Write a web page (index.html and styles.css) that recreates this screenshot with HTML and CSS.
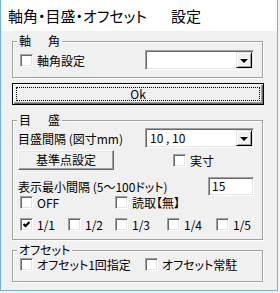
FILE: index.html
```html
<!DOCTYPE html>
<html lang="ja">
<head>
    <meta charset="UTF-8">
    <title>軸角・目盛・オフセット 設定</title>
    <link rel="stylesheet" href="styles.css">
</head>
<body>
    <div class="window">
        <div class="titlebar">
            <span>軸角・目盛・オフセット</span><span class="title-tail">設定</span>
        </div>

        <div class="client">
            <fieldset class="group group-axis">
                <legend>軸<span class="gap"></span>角</legend>
                <div class="row">
                    <label class="check"><span class="box"></span>軸角設定</label>
                    <div class="combo">
                        <span class="combo-value"></span>
                        <span class="drop"><i class="arrow"></i></span>
                    </div>
                </div>
            </fieldset>

            <button class="btn btn-default"><span class="focus">Ok</span></button>

            <fieldset class="group group-scale">
                <legend>目<span class="gap"></span>盛</legend>
                <div class="row row-pitch">
                    <span>目盛間隔 (図寸mm)</span>
                    <div class="combo">
                        <span class="combo-value">10 , 10</span>
                        <span class="drop"><i class="arrow"></i></span>
                    </div>
                </div>
                <div class="row row-base">
                    <button class="btn btn-base">基準点設定</button>
                    <label class="check check-real"><span class="box"></span>実寸</label>
                </div>
                <div class="row row-min">
                    <span>表示最小間隔 (5～100ドット)</span>
                    <div class="field">15</div>
                </div>
                <div class="row row-checks row-off">
                    <label class="check col-off"><span class="box"></span>OFF</label>
                    <label class="check"><span class="box"></span>読取【無】</label>
                </div>
                <div class="row row-checks row-frac">
                    <label class="check frac-1"><span class="box checked"><svg viewBox="0 0 7 7" width="7" height="7"><polyline points="0.5,3 2.5,5 6.5,1" fill="none" stroke="#000" stroke-width="2"/></svg></span>1/1</label>
                    <label class="check frac-2"><span class="box"></span>1/2</label>
                    <label class="check frac-3"><span class="box"></span>1/3</label>
                    <label class="check frac-4"><span class="box"></span>1/4</label>
                    <label class="check"><span class="box"></span>1/5</label>
                </div>
            </fieldset>

            <fieldset class="group group-offset">
                <legend class="legend-plain">オフセット</legend>
                <div class="row row-checks">
                    <label class="check col-once"><span class="box"></span>オフセット1回指定</label>
                    <label class="check"><span class="box"></span>オフセット常駐</label>
                </div>
            </fieldset>
        </div>
    </div>
</body>
</html>
```

FILE: styles.css
```css
html, body {
    margin: 0;
    padding: 0;
}

body {
    background: #f3f3f3;
    font-family: "Noto Sans CJK JP", sans-serif;
    font-size: 12px;
    color: #000;
    font-feature-settings: "palt";
}

.window {
    box-sizing: border-box;
    width: 278px;
    height: 291px;
    border: 1px solid #78aee0;
    border-top: none;
    background: #f0f0f0;
}

.titlebar {
    height: 31px;
    line-height: 31px;
    padding-left: 7px;
    background: #fff;
    font-size: 15px;
    white-space: nowrap;
}

.title-tail {
    margin-left: 24px;
}

.client {
    padding: 3px 13px 0 11px;
}

/* group boxes */
.group {
    width: 251px;
    box-sizing: border-box;
    margin: 0;
    padding: 2px 8px 7px 5px;
    border: 1px solid #a0a0a0;
    box-shadow: inset 1px 1px 0 #fff, 1px 1px 0 #fff;
    min-width: 0;
}

.group legend {
    padding: 0 2px;
    margin-left: -1px;
    line-height: 14px;
    background: #f0f0f0;
}

.gap {
    display: inline-block;
    width: 17px;
}

.row {
    display: flex;
    align-items: center;
}

.group-axis .row {
    height: 20px;
}

/* checkbox */
.check {
    display: flex;
    align-items: center;
    height: 13px;
    line-height: 13px;
    margin-left: 2px;
    white-space: nowrap;
}

.box {
    box-sizing: border-box;
    width: 13px;
    height: 13px;
    margin-right: 4px;
    background: #fff;
    border: 1px solid;
    border-color: #a0a0a0 #fff #fff #a0a0a0;
    box-shadow: inset 1px 1px 0 #696969, inset -1px -1px 0 #e3e3e3;
    display: flex;
    align-items: center;
    justify-content: center;
    flex: none;
}

.box svg {
    display: block;
}

/* combo box */
.combo {
    box-sizing: border-box;
    display: flex;
    width: 109px;
    height: 20px;
    margin-left: auto;
    padding: 1px;
    background: #fff;
    border: 1px solid;
    border-color: #a0a0a0 #fff #fff #a0a0a0;
    box-shadow: inset 1px 1px 0 #696969, inset -1px -1px 0 #e3e3e3;
}

.combo-value {
    flex: 1;
    padding-left: 3px;
    line-height: 16px;
}

.drop {
    box-sizing: border-box;
    width: 16px;
    height: 16px;
    background: #f0f0f0;
    border: 1px solid;
    border-color: #e3e3e3 #000 #000 #e3e3e3;
    box-shadow: inset 1px 1px 0 #fff, inset -1px -1px 0 #a0a0a0;
    display: flex;
    align-items: center;
    justify-content: center;
}

.arrow {
    width: 0;
    height: 0;
    border-left: 4px solid transparent;
    border-right: 4px solid transparent;
    border-top: 4px solid #000;
    margin-top: 1px;
}

.field {
    box-sizing: border-box;
    width: 46px;
    height: 19px;
    margin-left: auto;
    padding-left: 3px;
    line-height: 15px;
    background: #fff;
    border: 1px solid;
    border-color: #a0a0a0 #fff #fff #a0a0a0;
    box-shadow: inset 1px 1px 0 #696969, inset -1px -1px 0 #e3e3e3;
}

/* push buttons */
.btn {
    box-sizing: border-box;
    margin: 0;
    padding: 0;
    font: inherit;
    color: #000;
    background: #f0f0f0;
    border: 1px solid;
    border-color: #fff #696969 #696969 #fff;
    box-shadow: inset -1px -1px 0 #a0a0a0, inset 1px 1px 0 #e3e3e3;
}

.btn-default {
    display: flex;
    width: 252px;
    height: 22px;
    margin-top: 5px;
    padding: 3px;
    border-color: #000;
    box-shadow: inset 1px 1px 0 #fff, inset -1px -1px 0 #696969, inset -2px -2px 0 #a0a0a0;
}

.focus {
    flex: 1;
    border: 1px dotted #000;
    line-height: 12px;
    text-align: center;
}

.btn-base {
    width: 96px;
    height: 20px;
    line-height: 18px;
}

.group-scale {
    margin-top: 8px;
    padding-top: 1px;
    padding-bottom: 8px;
}

.row-pitch {
    height: 20px;
}

.row-base {
    height: 20px;
    margin-top: 2px;
}

.check-real {
    margin-left: 59px;
}

.row-min {
    height: 19px;
    margin-top: 7px;
}

.row-checks {
    height: 13px;
}

.row-off {
    margin-top: 0;
}

.row-frac {
    margin-top: 9px;
}

.col-off {
    width: 93px;
}

.frac-1 { width: 46px; }
.frac-2 { width: 45px; }
.frac-3 { width: 50px; }
.frac-4 { width: 47px; }

.group-offset {
    margin-top: 3px;
    padding-top: 1px;
    padding-bottom: 10px;
}

.col-once {
    width: 123px;
}
```
